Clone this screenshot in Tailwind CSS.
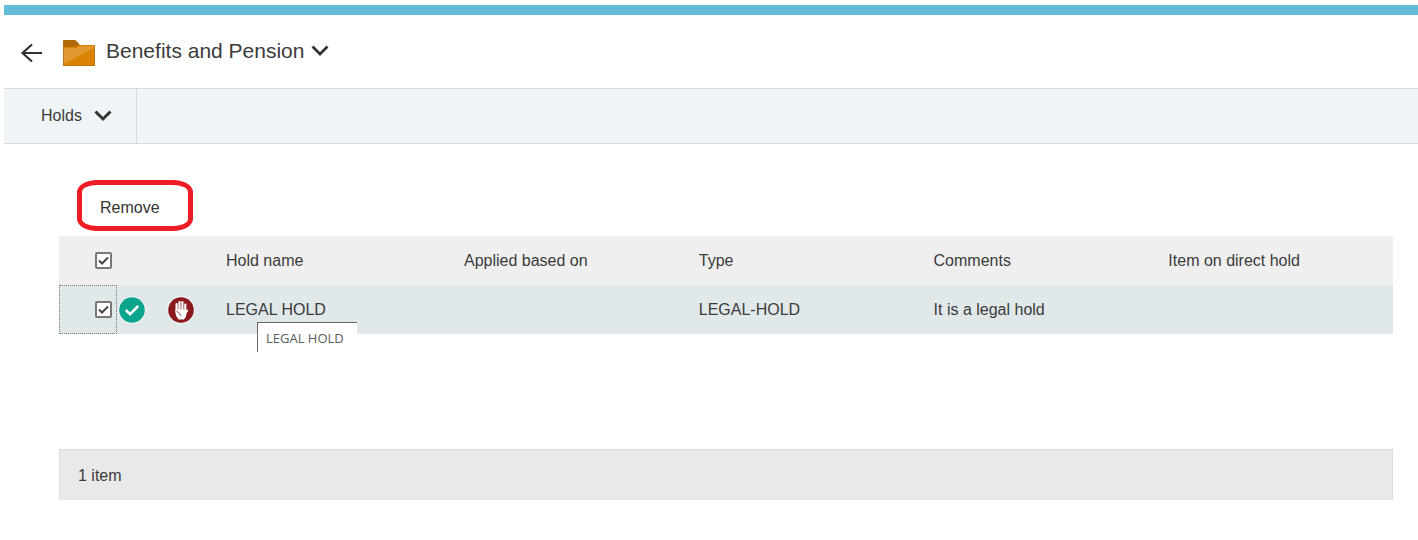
<!DOCTYPE html>
<html lang="en">
<head>
  <meta charset="UTF-8" />
  <meta name="viewport" content="width=device-width, initial-scale=1.0" />
  <title>Benefits and Pension | Holds</title>
  <script src="https://cdn.jsdelivr.net/npm/@tailwindcss/browser@4"></script>
</head>
<body class="bg-white text-[#3b3b3b] text-base font-['Liberation_Sans',Arial,sans-serif] pt-[5px] pl-1">
  <!-- Header -->
  <div class="h-2.5 bg-[#63bdda]"></div>
  <header class="h-[73px] flex items-center pl-4 pb-[2px]">
    <button type="button" aria-label="Back" class="mr-[19px]">
      <svg class="w-6 h-6 block mt-1" viewBox="0 0 24 24" fill="none" stroke="#333" stroke-width="2.200">
        <path d="M22 12H2.500M12 3.500L2.500 12l9.500 8.500" />
      </svg>
    </button>
    <svg class="w-8 h-[26px] mt-1 mr-[11px]" viewBox="0 0 32 26">
      <path d="M0 1q0-1 1-1h10.500q1 0 2 1l3.500 4h14q1 0 1 1v20H0z" fill="#b26a04" />
      <path d="M0 7h12.500l4.500-2h14q1 0 1 1v20H0z" fill="#db8202" />
      <path d="M1 8h12l4-2h14v2L1 24z" fill="#e0982f" />
      <path d="M.5 7v18.500h31V5.500" fill="none" stroke="#bd7310" />
    </svg>
    <h1 class="text-[21px] leading-6">Benefits and Pension</h1>
    <button type="button" aria-label="Folder actions" class="ml-[7px]">
      <svg class="w-[18px] h-3 block" viewBox="0 0 18 12" fill="none" stroke="#333" stroke-width="2.700">
        <path d="M1.500 1.500L9 9l7.500-7.500" />
      </svg>
    </button>
  </header>

  <!-- Toolbar -->
  <div class="h-14 bg-[#eff5f6] border-y border-[#d6d9da] flex">
    <button type="button" class="w-[133px] border-r border-[#d6d9da] flex items-center gap-3 pl-[37px]">
      Holds
      <svg class="w-[18px] h-3" viewBox="0 0 18 12" fill="none" stroke="#333" stroke-width="3">
        <path d="M1.500 1.500L9 9l7.500-7.500" />
      </svg>
    </button>
  </div>

  <main class="pl-[55px] pr-[25px] pt-9">
    <button type="button" class="w-[116px] h-[51px] ml-[18px] mb-[5px] pl-[18px] pt-1 border-[5px] border-[#ee1c25] rounded-[20px/12px] text-left text-[#333]">Remove</button>

    <!-- Holds table -->
    <div class="relative">
      <table class="w-full table-fixed text-left">
        <colgroup>
          <col class="w-[58px]" />
          <col class="w-[50px]" />
          <col class="w-[59px]" />
          <col class="w-[238px]" />
          <col class="w-[17.6%]" />
          <col class="w-[17.6%]" />
          <col class="w-[17.6%]" />
          <col />
        </colgroup>
        <thead>
          <tr class="h-[49px] bg-[#efefef]">
            <th class="p-0">
              <label class="relative block w-[17px] h-[17px] ml-9">
                <input type="checkbox" checked aria-label="Select all holds" class="appearance-none block w-[17px] h-[17px] bg-white border-2 border-[#777] rounded-xs" />
                <svg class="absolute inset-0 pointer-events-none" viewBox="0 0 17 17" fill="none" stroke="#444" stroke-width="2"><path d="M4 8.500l3 3 6-6" /></svg>
              </label>
            </th>
            <th class="p-0"></th>
            <th class="p-0"></th>
            <th class="p-0 font-normal">Hold name</th>
            <th class="p-0 font-normal">Applied based on</th>
            <th class="p-0 font-normal">Type</th>
            <th class="p-0 font-normal">Comments</th>
            <th class="p-0 font-normal">Item on direct hold</th>
          </tr>
        </thead>
        <tbody>
          <tr class="h-[49px] bg-[#e0e8ea]">
            <td class="p-0 outline-1 outline-dotted outline-[#777] -outline-offset-1">
              <label class="relative block w-[17px] h-[17px] ml-9">
                <input type="checkbox" checked aria-label="Select LEGAL HOLD" class="appearance-none block w-[17px] h-[17px] bg-white border-2 border-[#777] rounded-xs" />
                <svg class="absolute inset-0 pointer-events-none" viewBox="0 0 17 17" fill="none" stroke="#444" stroke-width="2"><path d="M4 8.500l3 3 6-6" /></svg>
              </label>
            </td>
            <td class="p-0 pl-px">
              <svg class="w-7 h-7" viewBox="0 0 28 28">
                <circle cx="14" cy="14" r="13.800" fill="#f4f8f8" />
                <circle cx="14" cy="14" r="12.800" fill="#0aa58c" />
                <path d="M7.800 14l4.200 4.200 8.200-8.200" fill="none" stroke="#fff" stroke-width="2.500" />
              </svg>
            </td>
            <td class="p-0">
              <svg class="w-7 h-7" viewBox="0 0 28 28">
                <circle cx="14" cy="14" r="13.800" fill="#f4f8f8" />
                <circle cx="14" cy="14" r="12.800" fill="#8a181c" />
                <path d="M9.600 16V8M12.500 14V6M15.400 14V6M18.300 16V8.500" fill="none" stroke="#fff" stroke-width="2.200" stroke-linecap="round" />
                <path d="M8.500 13.500h10.900V18q0 3-2.500 5.500h-5.200Q8.500 20.500 8.500 17z" fill="#fff" />
                <path d="M18.300 17.500l2-3" fill="none" stroke="#fff" stroke-width="1.800" stroke-linecap="round" />
                <path d="M9.500 15.500q2.500.5 3 2.200t2 2.300" fill="none" stroke="#8a181c" stroke-width=".8" />
              </svg>
            </td>
            <td class="p-0">LEGAL HOLD</td>
            <td class="p-0"></td>
            <td class="p-0">LEGAL-HOLD</td>
            <td class="p-0">It is a legal hold</td>
            <td class="p-0"></td>
          </tr>
        </tbody>
      </table>
      <div role="tooltip" class="absolute left-[198px] top-[86px] w-[100px] h-[30px] bg-white border-t border-l border-[#666] pl-2 text-sm leading-[30px] text-[#5c5c5c] whitespace-nowrap font-['Open_Sans','Noto_Sans',sans-serif] text-[13px]">LEGAL HOLD</div>
    </div>

    <footer class="mt-[115px] h-[51px] flex items-center pl-[18px] pt-[3px] bg-[#e9e9e9] border border-[#dcdcdc] border-b-[#e9e9e9]">1 item</footer>
  </main>
</body>
</html>
